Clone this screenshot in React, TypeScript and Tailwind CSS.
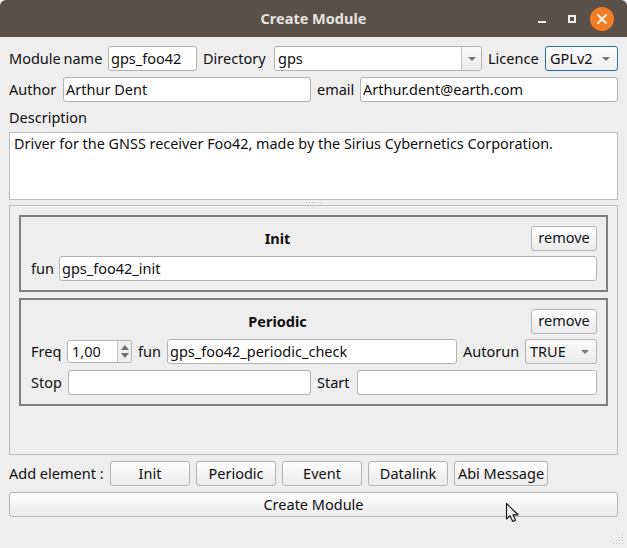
import React from "react";

const inputCls =
  "block h-[25px] min-w-0 shrink-0 rounded-[3px] border border-[#b2b2b2] bg-white pb-[2px] pl-[2px] pr-1 text-[14.5px] text-[#101010] outline-none";
const btnCls =
  "flex h-[25px] shrink-0 items-center justify-center rounded-[3px] border border-[#b4b4b4] bg-gradient-to-b from-[#fdfdfd] to-[#ebebeb] text-[14.5px] text-[#101010]";

function Arrow({ color = "#777777" }: { color?: string }) {
  return (
    <svg width="8" height="4" viewBox="0 0 8 4" className="block">
      <path d="M0 0H8L4 4Z" fill={color} />
    </svg>
  );
}

function Field({ value = "", className = "" }: { value?: string; className?: string }) {
  return <input readOnly value={value} className={`${inputCls} ${className}`} />;
}

function Label({ children, className = "" }: { children: React.ReactNode; className?: string }) {
  return <span className={`shrink-0 whitespace-nowrap leading-[25px] ${className}`}>{children}</span>;
}

function Group({ title, h, children }: { title: string; h: string; children: React.ReactNode }) {
  return (
    <div className={`flex flex-col gap-[6px] border-2 border-[#808080] pl-[10px] pr-[9px] pt-[9px] ${h}`}>
      <div className="flex h-[24px] items-center">
        <span className="mr-[7px] flex-1 pt-[2px] text-center text-[14.5px] font-bold text-[#101010]">{title}</span>
        <button className={`${btnCls} h-[24px] w-[66px]`}>remove</button>
      </div>
      {children}
    </div>
  );
}

export default function App() {
  return (
    <div
      className="relative flex h-[548px] w-[627px] flex-col overflow-hidden bg-[#eeeeee] text-[14.5px] text-[#101010]"
      style={{ fontFamily: '"Noto Sans", "Open Sans", sans-serif' }}
    >
      <div className="relative flex h-[37px] shrink-0 items-center justify-center rounded-t-[6px] bg-[#5a504a]">
        <span className="text-[14.5px] font-bold text-[#e6e3e0]">Create Module</span>
        <div className="absolute right-[13px] top-[7px] flex items-center">
          <svg width="90" height="24" viewBox="0 0 90 24" className="block">
            <rect x="14" y="14" width="8" height="2" fill="#f2f0ee" />
            <rect x="45" y="9" width="6" height="6" fill="none" stroke="#f2f0ee" strokeWidth="2" />
            <circle cx="78" cy="12" r="12" fill="#f37d22" />
            <path d="M74 8L82 16M82 8L74 16" stroke="#fdf3ea" strokeWidth="2" strokeLinecap="round" />
          </svg>
        </div>
      </div>

      <div className="flex flex-1 flex-col px-[9px] pt-[9px]">
        <div className="flex h-[25px] items-center">
          <Label className="w-[99px] [word-spacing:-1px]">Module name</Label>
          <Field value="gps_foo42" className="w-[89px]" />
          <Label className="ml-[6px] w-[71px]">Directory</Label>
          <div className="flex h-[25px] w-[208px] shrink-0 overflow-hidden rounded-[3px] border border-[#b2b2b2] bg-white">
            <span className="flex-1 pl-[3px] leading-[23px]">gps</span>
            <span className="flex w-[20px] items-center justify-center border-l border-[#c4c4c4] bg-gradient-to-b from-[#fafafa] to-[#ebebeb]">
              <Arrow />
            </span>
          </div>
          <Label className="ml-[6px] w-[57px]">Licence</Label>
          <div className="flex h-[25px] w-[73px] shrink-0 items-center justify-between rounded-[3px] border border-[#2c6d99] bg-gradient-to-b from-[#fbfbfb] to-[#eeeeee] pl-[4px] pr-[7px]">
            <span>GPLv2</span>
            <Arrow />
          </div>
        </div>

        <div className="mt-[6px] flex h-[25px] items-center">
          <Label className="w-[54px]">Author</Label>
          <Field value="Arthur Dent" className="w-[248px]" />
          <Label className="ml-[6px] w-[43px]">email</Label>
          <Field value="Arthur.dent@earth.com" className="w-[258px]" />
        </div>

        <Label className="mt-[3px]">Description</Label>
        <textarea
          readOnly
          value="Driver for the GNSS receiver Foo42, made by the Sirius Cybernetics Corporation."
          className="mt-[2px] block h-[68px] w-[609px] resize-none rounded-none border border-[#bdbdbd] bg-white px-[4px] pt-[2px] text-[14.4px] leading-[18px] text-[#101010] outline-none"
        />

        <div className="flex h-[5px] items-center justify-center">
          <svg width="16" height="1" viewBox="0 0 16 1" className="block">
            <path d="M0 .5H16" stroke="#b8b8b8" strokeDasharray="1 2" />
          </svg>
        </div>

        <div className="flex h-[250px] w-[609px] flex-col gap-[6px] border border-[#bdbdbd] px-[9px] pt-[9px]">
          <Group title="Init" h="h-[77px]">
            <div className="flex h-[25px] items-center">
              <Label className="w-[28px]">fun</Label>
              <Field value="gps_foo42_init" className="w-[538px]" />
            </div>
          </Group>

          <Group title="Periodic" h="h-[108px]">
            <div className="flex h-[25px] items-center">
              <Label className="w-[36px]">Freq</Label>
              <div className="flex h-[23px] w-[65px] shrink-0 overflow-hidden rounded-[3px] border border-[#b2b2b2] bg-white">
                <span className="flex-1 pl-[4px] leading-[21px]">1,00</span>
                <span className="flex w-[14px] flex-col items-center justify-center gap-[3px] border-l border-[#c4c4c4] bg-[#efefef]">
                  <svg width="8" height="5" viewBox="0 0 8 5" className="block">
                    <path d="M0 5L4 0L8 5Z" fill="#6e6e6e" />
                  </svg>
                  <svg width="8" height="5" viewBox="0 0 8 5" className="block">
                    <path d="M0 0H8L4 5Z" fill="#6e6e6e" />
                  </svg>
                </span>
              </div>
              <Label className="ml-[6px] w-[29px]">fun</Label>
              <Field value="gps_foo42_periodic_check" className="w-[290px]" />
              <Label className="ml-[6px] w-[62px]">Autorun</Label>
              <div className="flex h-[25px] w-[72px] shrink-0 items-center justify-between rounded-[3px] border border-[#b4b4b4] bg-gradient-to-b from-[#fafafa] to-[#ebebeb] pl-[4px] pr-[7px]">
                <span>TRUE</span>
                <Arrow />
              </div>
            </div>
            <div className="flex h-[25px] items-center">
              <Label className="w-[37px]">Stop</Label>
              <Field className="w-[243px]" />
              <Label className="ml-[6px] w-[40px]">Start</Label>
              <Field className="w-[240px]" />
            </div>
          </Group>
        </div>

        <div className="mt-[6px] flex h-[25px] items-center gap-[6px]">
          <Label className="w-[95px]">Add element :</Label>
          <button className={`${btnCls} w-[80px]`}>Init</button>
          <button className={`${btnCls} w-[80px]`}>Periodic</button>
          <button className={`${btnCls} w-[80px]`}>Event</button>
          <button className={`${btnCls} w-[80px]`}>Datalink</button>
          <button className={`${btnCls} w-[94px]`}>Abi Message</button>
        </div>

        <button className={`${btnCls} mt-[6px] w-[609px]`}>Create Module</button>
      </div>

      <svg width="12" height="12" viewBox="0 0 12 12" className="absolute bottom-[2px] right-[2px] block">
        <g fill="#c4c4c4">
          <rect x="9" y="0" width="1" height="1" />
          <rect x="6" y="3" width="1" height="1" />
          <rect x="9" y="3" width="1" height="1" />
          <rect x="3" y="6" width="1" height="1" />
          <rect x="6" y="6" width="1" height="1" />
          <rect x="9" y="6" width="1" height="1" />
          <rect x="0" y="9" width="1" height="1" />
          <rect x="3" y="9" width="1" height="1" />
          <rect x="6" y="9" width="1" height="1" />
          <rect x="9" y="9" width="1" height="1" />
        </g>
      </svg>

      <svg width="15" height="21" viewBox="0 0 15 21" className="absolute left-[505px] top-[502px] block">
        <path
          d="M1.5 1.5V17L5 13.8L7.8 19.5L10.5 18.3L8 12.8H13Z"
          fill="#f5f5f5"
          stroke="#1a1a1a"
          strokeWidth="1.2"
          strokeLinejoin="round"
        />
      </svg>
    </div>
  );
}
